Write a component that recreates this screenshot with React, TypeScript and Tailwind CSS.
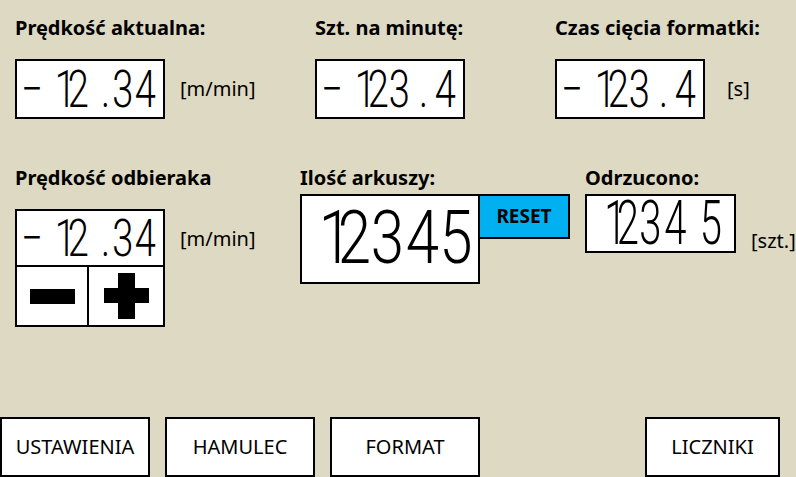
import React from "react";

function Ch({ c, cell, fix }: { c: string; cell: string; fix: string }) {
  return (
    <span className={`flex shrink-0 ${cell}`}>
      <span className={`block whitespace-nowrap ${fix}`}>{c}</span>
    </span>
  );
}

function Label({ children }: { children: React.ReactNode }) {
  return <div className="text-[20px] font-bold leading-[24px]">{children}</div>;
}

function Unit({ children, className = "" }: { children: React.ReactNode; className?: string }) {
  return <div className={`text-[20px] leading-[24px] ${className}`}>{children}</div>;
}

// "- 12.34"
function SpeedDigits() {
  return (
    <div className="flex scale-y-[1.37] pl-[7px] font-['Roboto',sans-serif] text-[38px] font-light leading-none">
      <Ch c="−" cell="w-[16px]" fix="-ml-[2.7px] tracking-[-5.3px]" />
      <Ch c="1" cell="ml-[23px] w-[5px]" fix="-ml-[8.2px] tracking-[-16.3px]" />
      <Ch c="2" cell="ml-[2px] w-[17px]" fix="-ml-[2.2px] tracking-[-4.3px]" />
      <Ch c="." cell="ml-[16px] w-[6px]" fix="-ml-[2px] tracking-[-4px]" />
      <Ch c="3" cell="ml-[5px] w-[18px]" fix="-ml-[1.7px] tracking-[-3.3px]" />
      <Ch c="4" cell="ml-[5px] w-[17px]" fix="-ml-[2.2px] tracking-[-4.3px]" />
    </div>
  );
}

// "- 123.4"
function CountDigits() {
  return (
    <div className="flex scale-y-[1.37] pl-[7px] font-['Roboto',sans-serif] text-[38px] font-light leading-none">
      <Ch c="−" cell="w-[16px]" fix="-ml-[2.7px] tracking-[-5.3px]" />
      <Ch c="1" cell="ml-[23px] w-[5px]" fix="-ml-[8.2px] tracking-[-16.3px]" />
      <Ch c="2" cell="ml-[2px] w-[17px]" fix="-ml-[2.2px] tracking-[-4.3px]" />
      <Ch c="3" cell="ml-[4px] w-[17px]" fix="-ml-[2.2px] tracking-[-4.3px]" />
      <Ch c="." cell="ml-[13px] w-[6px]" fix="-ml-[2px] tracking-[-4px]" />
      <Ch c="4" cell="ml-[10px] w-[17px]" fix="-ml-[2.2px] tracking-[-4.3px]" />
    </div>
  );
}

function Box({ className, children }: { className: string; children: React.ReactNode }) {
  return (
    <div className={`flex items-center border-2 border-black bg-white ${className}`}>{children}</div>
  );
}

function NavButton({ label, className }: { label: string; className: string }) {
  return (
    <button
      className={`flex h-[60px] shrink-0 items-center justify-center border-2 border-black bg-white text-[20px] leading-none ${className}`}
    >
      {label}
    </button>
  );
}

export default function App() {
  return (
    <div className="h-[477px] w-[796px] overflow-hidden bg-[#ddd9c3] font-['Noto_Sans',sans-serif] text-black">
      {/* top row */}
      <div className="flex pl-[15px] pt-[16px]">
        <div className="w-[300px] shrink-0">
          <Label>Prędkość aktualna:</Label>
          <div className="mt-[19px] flex items-center">
            <Box className="h-[60px] w-[150px]">
              <SpeedDigits />
            </Box>
            <Unit className="ml-[15px]">[m/min]</Unit>
          </div>
        </div>
        <div className="w-[240px] shrink-0">
          <Label>Szt. na minutę:</Label>
          <div className="mt-[19px] flex items-center">
            <Box className="h-[60px] w-[150px]">
              <CountDigits />
            </Box>
          </div>
        </div>
        <div>
          <Label>Czas cięcia formatki:</Label>
          <div className="mt-[19px] flex items-center">
            <Box className="h-[60px] w-[150px]">
              <CountDigits />
            </Box>
            <Unit className="ml-[22px]">[s]</Unit>
          </div>
        </div>
      </div>

      {/* middle row */}
      <div className="mt-[47px] flex pl-[15px]">
        <div className="w-[285px] shrink-0">
          <Label>Prędkość odbieraka</Label>
          <div className="mt-[19px] flex items-start">
            <div className="w-[150px] border-2 border-black bg-white">
              <div className="flex h-[56px] items-center border-b-2 border-black">
                <SpeedDigits />
              </div>
              <div className="flex h-[58px]">
                <button className="flex w-[72px] items-center justify-center border-r-2 border-black">
                  <span className="h-[15px] w-[45px] bg-black" />
                </button>
                <button className="flex flex-1 items-center justify-center">
                  <svg width="45" height="46" viewBox="0 0 45 46">
                    <rect x="14" y="0" width="17" height="46" fill="#000" />
                    <rect x="0" y="15" width="45" height="15" fill="#000" />
                  </svg>
                </button>
              </div>
            </div>
            <Unit className="ml-[15px] mt-[18px]">[m/min]</Unit>
          </div>
        </div>

        <div className="w-[285px] shrink-0">
          <Label>Ilość arkuszy:</Label>
          <div className="mt-[4px] flex items-start">
            <Box className="h-[90px] w-[180px]">
              <div className="flex scale-y-[1.22] pl-[30px] font-['Roboto',sans-serif] text-[60px] font-light leading-none">
                <Ch c="1" cell="w-[7px]" fix="-ml-[13.3px] tracking-[-26.7px]" />
                <Ch c="2" cell="ml-[2px] w-[27px]" fix="-ml-[3.3px] tracking-[-6.7px]" />
                <Ch c="3" cell="ml-[6px] w-[27px]" fix="-ml-[3.3px] tracking-[-6.7px]" />
                <Ch c="4" cell="ml-[8px] w-[27px]" fix="-ml-[3.3px] tracking-[-6.7px]" />
                <Ch c="5" cell="ml-[7px] w-[26px]" fix="-ml-[3.8px] tracking-[-7.7px]" />
              </div>
            </Box>
            <button className="-ml-[2px] flex h-[45px] w-[92px] items-center justify-center border-2 border-black bg-[#00b0f0] text-[19px] font-bold leading-none">
              RESET
            </button>
          </div>
        </div>

        <div>
          <Label>Odrzucono:</Label>
          <div className="mt-[4px] flex items-start">
            <Box className="h-[59px] w-[151px]">
              <div className="flex scale-y-[1.51] pl-[26px] font-['Roboto',sans-serif] text-[40px] font-light leading-none">
                <Ch c="1" cell="w-[5px]" fix="-ml-[8.7px] tracking-[-17.5px]" />
                <Ch c="2" cell="ml-[1px] w-[18px]" fix="-ml-[2.2px] tracking-[-4.5px]" />
                <Ch c="3" cell="ml-[5px] w-[17px]" fix="-ml-[2.7px] tracking-[-5.5px]" />
                <Ch c="4" cell="ml-[8px] w-[17px]" fix="-ml-[2.7px] tracking-[-5.5px]" />
                <Ch c="5" cell="ml-[18px] w-[18px]" fix="-ml-[2.2px] tracking-[-4.5px]" />
              </div>
            </Box>
            <Unit className="ml-[15px] mt-[35px]">[szt.]</Unit>
          </div>
        </div>
      </div>

      {/* bottom navigation */}
      <div className="mt-[90px] flex">
        <NavButton label="USTAWIENIA" className="w-[150px]" />
        <NavButton label="HAMULEC" className="ml-[15px] w-[150px]" />
        <NavButton label="FORMAT" className="ml-[15px] w-[150px]" />
        <NavButton label="LICZNIKI" className="ml-[165px] w-[135px]" />
      </div>
    </div>
  );
}
